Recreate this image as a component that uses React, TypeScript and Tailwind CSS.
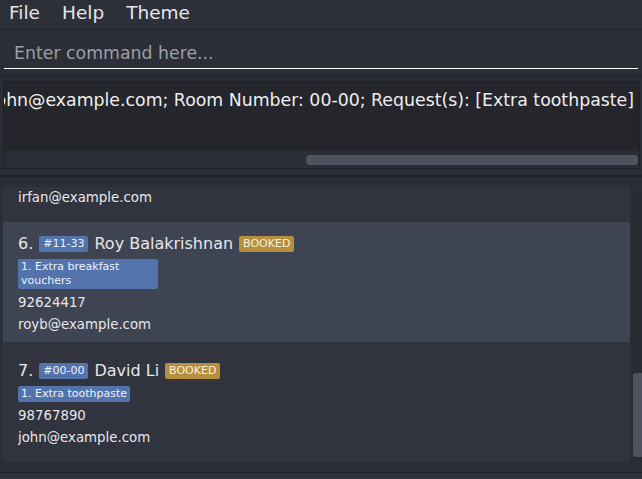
const guests = [
  {
    idx: 5,
    room: "#05-12",
    name: "Irfan Ibrahim",
    tags: ["1. Extra pillows"],
    phone: "92492021",
    email: "irfan@example.com",
    selected: false,
  },
  {
    idx: 6,
    room: "#11-33",
    name: "Roy Balakrishnan",
    tags: ["1. Extra breakfast vouchers"],
    phone: "92624417",
    email: "royb@example.com",
    selected: true,
  },
  {
    idx: 7,
    room: "#00-00",
    name: "David Li",
    tags: ["1. Extra toothpaste"],
    phone: "98767890",
    email: "john@example.com",
    selected: false,
  },
];

type Guest = (typeof guests)[number];

function GuestCard({ g }: { g: Guest }) {
  return (
    <div
      className={`flex h-[120px] flex-col justify-center pl-[15px] pt-[3px] text-[#e6e7ea] ${
        g.selected ? "bg-[#3f4452]" : "bg-[#31343e]"
      }`}
    >
      <div className="flex h-[22px] items-center gap-[6px] whitespace-nowrap">
        <span className="text-[16px]">{g.idx}.</span>
        <span className="flex h-[16px] items-center rounded-[2px] bg-[#5373ad] px-[4px] text-[11px] text-[#eef1f7]">
          {g.room}
        </span>
        <span className="text-[16px]">{g.name}</span>
        <span className="flex h-[16px] items-center rounded-[2px] bg-[#b58f3c] px-[4px] text-[11px] text-[#f5efe0]">
          BOOKED
        </span>
      </div>
      <div className="mt-[4px] flex flex-col">
        {g.tags.map((t) => (
          <span
            key={t}
            className="w-fit max-w-[140px] rounded-[2px] bg-[#5373ad] px-[3px] py-[1px] text-[11px] leading-[14px] text-[#eef1f7]"
          >
            {t}
          </span>
        ))}
      </div>
      <div className="mt-[4px] text-[13.33px] leading-[19px]">{g.phone}</div>
      <div className="mt-[3px] text-[13.33px] leading-[19px]">{g.email}</div>
    </div>
  );
}

export default function App() {
  return (
    <div className="flex h-[479px] w-[642px] flex-col overflow-hidden bg-[#2b2e36] font-['DejaVu_Sans',sans-serif]">
      {/* menu bar */}
      <div className="flex h-[30px] shrink-0 items-start gap-[22px] border-b border-[#22242a] bg-[#2d3038] pl-[9px] text-[18.5px] leading-[26px] text-[#e4e5e8]">
        <span>File</span>
        <span>Help</span>
        <span>Theme</span>
      </div>

      {/* command box */}
      <div className="h-[45px] shrink-0 px-[4px] pt-[5px]">
        <div className="flex h-[34px] items-center border-t border-b border-t-[#262830] border-b-white bg-[#2b2e36] pl-[10px] pt-[3px] text-[17.33px] text-[#9c9fa7]">
          Enter command here...
        </div>
      </div>
      <div className="h-px shrink-0 bg-[#202228]" />

      {/* result display */}
      <div className="h-[99px] shrink-0 pl-[3px] pr-[2px] pt-[5px]">
        <div className="flex h-[88px] flex-col border border-[#1f2126]">
          <div className="flex h-[69px] justify-end overflow-hidden whitespace-nowrap bg-[#24262b] pr-[5px] pt-[8px] text-[17.33px] leading-[20px] text-[#eeeeef]">
            <span className="shrink-0">
              New guest added: David Li; Phone: 98767890; Email: john@example.com; Room Number: 00-00; Request(s): [Extra toothpaste]
            </span>
          </div>
          <div className="flex flex-1 items-center bg-[#2b2e36] pl-[302px] pr-[1px]">
            <div className="h-[10px] flex-1 rounded-[4px] bg-[#4f5360]" />
          </div>
        </div>
      </div>
      <div className="h-[2px] shrink-0 bg-[#202228]" />

      {/* guest list */}
      <div className="h-[295px] shrink-0 py-[10px] pl-[3px]">
        <div className="flex h-[275px]">
          <div className="flex-1 overflow-hidden">
            <div className="mt-[-85px] flex flex-col">
              {guests.map((g) => (
                <GuestCard key={g.idx} g={g} />
              ))}
            </div>
          </div>
          <div className="w-[12px] bg-[#2a2c33] pl-[3px]">
            <div className="mt-[186px] h-[84px] rounded-l-[3px] bg-[#4f5360]" />
          </div>
        </div>
      </div>

      <div className="h-px shrink-0 bg-[#1f2126]" />
      <div className="flex-1 bg-[#2f323a]" />
    </div>
  );
}
